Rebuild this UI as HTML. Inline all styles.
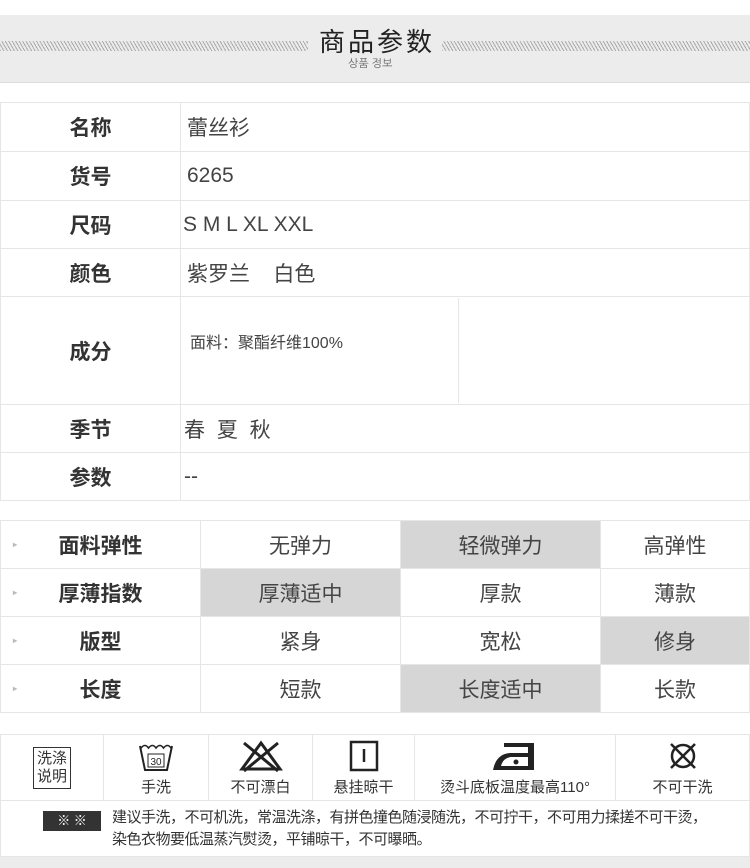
<!DOCTYPE html>
<html><head><meta charset="utf-8"><style>
*{margin:0;padding:0;box-sizing:border-box}
body{width:750px;height:868px;background:#fff;position:relative;overflow:hidden;font-family:"Liberation Sans","Noto Sans CJK SC",sans-serif;color:#333}
.a{position:absolute}
.hb{left:0;top:15px;width:750px;height:68px;background:#ececec;border-bottom:1px solid #ddd}
.stripe{top:41px;height:10px;background:repeating-linear-gradient(60deg,#aaa 0 1px,#ececec 1px 3px)}
.c{position:absolute;border:1px solid #e6e6e6;display:flex;align-items:center}
.lab{justify-content:center;font-weight:bold;font-size:21px;color:#333}
.val{padding-left:6px;font-size:21px;color:#444}
.t2{justify-content:center;font-size:21px;color:#444}
.g{background:#d6d6d6}
.arr{position:absolute;left:12px;font-size:8px;color:#bbb}
.ic{position:absolute;border:1px solid #e6e6e6;display:flex;flex-direction:column;align-items:center;justify-content:flex-end;padding-bottom:3px;font-size:15px;color:#333}
.ic svg{margin-bottom:4px}
</style></head><body>
<div class="a hb"></div>
<div class="a stripe" style="left:0;width:308px"></div>
<div class="a stripe" style="left:442px;width:308px"></div>
<div class="a" style="left:319px;top:26px;font-size:26px;letter-spacing:3px;color:#222;line-height:32px">商品参数</div>
<div class="a" style="left:348px;top:57px;font-size:11px;color:#666;font-family:'NanumGothic',sans-serif;line-height:13px">상품 정보</div>

<div class="c lab" style="left:0;top:102px;width:181px;height:50px">名称</div><div class="c val" style="left:180px;top:102px;width:570px;height:50px">蕾丝衫</div>
<div class="c lab" style="left:0;top:151px;width:181px;height:50px">货号</div><div class="c val" style="left:180px;top:151px;width:570px;height:50px">6265</div>
<div class="c lab" style="left:0;top:200px;width:181px;height:49px">尺码</div><div class="c val" style="left:180px;top:200px;width:570px;height:49px;padding-left:2px">S M L XL XXL</div>
<div class="c lab" style="left:0;top:248px;width:181px;height:49px">颜色</div><div class="c val" style="left:180px;top:248px;width:570px;height:49px">紫罗兰&nbsp;&nbsp;&nbsp;&nbsp;白色</div>
<div class="c lab" style="left:0;top:296px;width:181px;height:109px">成分</div><div class="c val" style="left:180px;top:296px;width:570px;height:109px;align-items:flex-start;padding-top:32px;font-size:16px;padding-left:9px">面料：聚酯纤维100%</div>
<div class="a" style="left:458px;top:298px;width:1px;height:105px;background:#e6e6e6"></div>
<div class="c lab" style="left:0;top:404px;width:181px;height:49px">季节</div><div class="c val" style="left:180px;top:404px;width:570px;height:49px;padding-left:3px;letter-spacing:3px">春 夏 秋</div>
<div class="c lab" style="left:0;top:452px;width:181px;height:49px">参数</div><div class="c val" style="left:180px;top:452px;width:570px;height:49px;padding-left:3px">--</div>

<div class="c lab" style="left:0;top:520px;width:201px;height:49px"><span class="arr">▸</span>面料弹性</div>
<div class="c t2" style="left:200px;top:520px;width:201px;height:49px">无弹力</div>
<div class="c t2 g" style="left:400px;top:520px;width:201px;height:49px">轻微弹力</div>
<div class="c t2" style="left:600px;top:520px;width:150px;height:49px">高弹性</div>
<div class="c lab" style="left:0;top:568px;width:201px;height:49px"><span class="arr">▸</span>厚薄指数</div>
<div class="c t2 g" style="left:200px;top:568px;width:201px;height:49px">厚薄适中</div>
<div class="c t2" style="left:400px;top:568px;width:201px;height:49px">厚款</div>
<div class="c t2" style="left:600px;top:568px;width:150px;height:49px">薄款</div>
<div class="c lab" style="left:0;top:616px;width:201px;height:49px"><span class="arr">▸</span>版型</div>
<div class="c t2" style="left:200px;top:616px;width:201px;height:49px">紧身</div>
<div class="c t2" style="left:400px;top:616px;width:201px;height:49px">宽松</div>
<div class="c t2 g" style="left:600px;top:616px;width:150px;height:49px">修身</div>
<div class="c lab" style="left:0;top:664px;width:201px;height:49px"><span class="arr">▸</span>长度</div>
<div class="c t2" style="left:200px;top:664px;width:201px;height:49px">短款</div>
<div class="c t2 g" style="left:400px;top:664px;width:201px;height:49px">长度适中</div>
<div class="c t2" style="left:600px;top:664px;width:150px;height:49px">长款</div>

<div class="ic" style="left:0;top:734px;width:104px;height:67px;justify-content:center;padding-bottom:0"><div style="border:1px solid #333;padding:2px 3px;font-size:15px;line-height:18px;text-align:center;margin:0">洗涤<br>说明</div></div>
<div class="ic" style="left:103px;top:734px;width:106px;height:67px"><svg width="36" height="30" viewBox="0 0 36 30"><path d="M2 4 L7 28 H29 L34 4" fill="none" stroke="#222" stroke-width="2"/><path d="M3 6 q4 -5 7.5 0 q4 -5 7.5 0 q4 -5 7.5 0 q4 -5 7.5 0" fill="none" stroke="#222" stroke-width="1.6"/><rect x="10" y="12" width="16" height="13" fill="none" stroke="#222" stroke-width="1"/><text x="18" y="23" font-size="10" text-anchor="middle" fill="#222" font-family="Liberation Sans">30</text></svg>手洗</div>
<div class="ic" style="left:208px;top:734px;width:105px;height:67px"><svg width="46" height="32" viewBox="0 0 46 32"><path d="M23 3 L42 29 H4 Z" fill="none" stroke="#222" stroke-width="3"/><path d="M6 3 L40 31 M40 3 L6 31" stroke="#222" stroke-width="3"/></svg>不可漂白</div>
<div class="ic" style="left:312px;top:734px;width:103px;height:67px"><svg width="30" height="32" viewBox="0 0 30 32"><rect x="2" y="2" width="26" height="28" fill="none" stroke="#222" stroke-width="2.5"/><path d="M15 9 V22" stroke="#222" stroke-width="2.5"/></svg>悬挂晾干</div>
<div class="ic" style="left:414px;top:734px;width:202px;height:67px"><svg width="50" height="32" viewBox="0 0 50 32"><path d="M14 3 H44 V30 H3 Q6 14 20 13 H38 V7 H14 Z" fill="#222"/><path d="M11 26 Q13 18 21 17 H38 V26 Z" fill="#fff"/><circle cx="26" cy="22" r="2.5" fill="#222"/></svg>烫斗底板温度最高110°</div>
<div class="ic" style="left:615px;top:734px;width:135px;height:67px"><svg width="32" height="32" viewBox="0 0 32 32"><circle cx="16" cy="16" r="11" fill="none" stroke="#222" stroke-width="2.5"/><path d="M4 4 L28 28 M28 4 L4 28" stroke="#222" stroke-width="2.5"/></svg>不可干洗</div>
<div class="a" style="left:0;top:800px;width:750px;height:57px;border:1px solid #e6e6e6"></div>
<div class="a" style="left:43px;top:811px;width:58px;height:20px;background:#333;color:#fff;font-size:13px;text-align:center;line-height:20px">※ ※</div>
<div class="a" style="left:112px;top:807px;width:625px;font-size:15px;line-height:22px;color:#333;letter-spacing:-0.5px">建议手洗，不可机洗，常温洗涤，有拼色撞色随浸随洗，不可拧干，不可用力揉搓不可干烫，<br>染色衣物要低温蒸汽熨烫，平铺晾干，不可曝晒。</div>
<div class="a" style="left:0;top:857px;width:750px;height:11px;background:#ececec"></div>
</body></html>
